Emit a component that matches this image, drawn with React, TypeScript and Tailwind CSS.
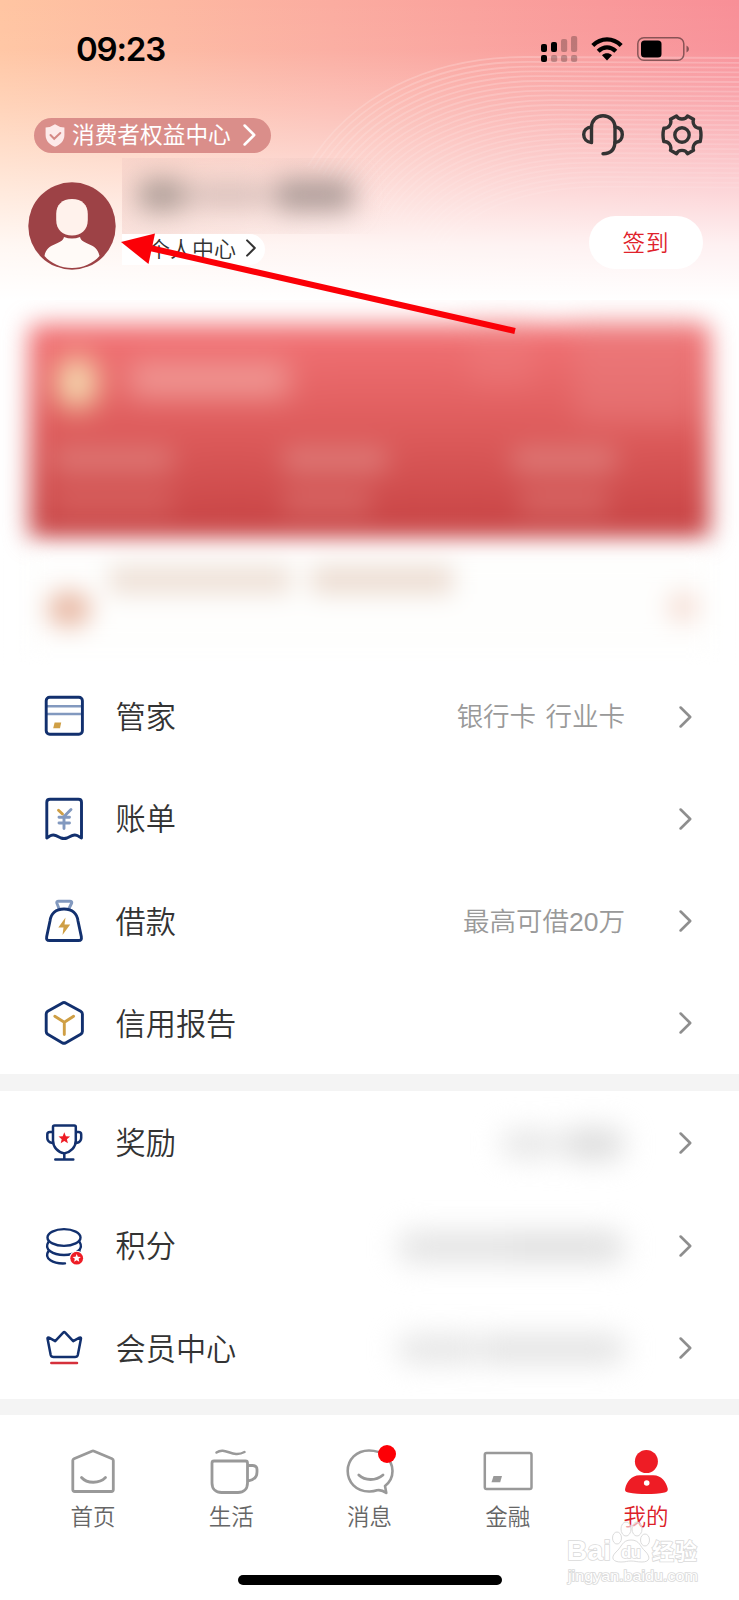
import React from 'react'

const NAVY = '#12306e'
const STEEL = '#8299bf'
const GOLD = '#cf9f45'
const RED = '#ee1c25'

type IconProps = {
  children: React.ReactNode
}

type MenuItem = {
  label: string
  note?: string
  hidden?: React.ReactNode
  icon: React.ReactNode
}

type TabItem = {
  label: string
  active?: boolean
  badge?: boolean
  icon: React.ReactNode
}

function RowIcon({ children }: IconProps) {
  return (
    <svg
      viewBox="0 0 44 44"
      className="w-11 h-11 mt-px shrink-0"
      fill="none"
      stroke={NAVY}
      strokeWidth="2.9"
      strokeLinecap="round"
      strokeLinejoin="round"
    >
      {children}
    </svg>
  )
}

function TabIcon({ children }: IconProps) {
  return (
    <svg
      viewBox="0 0 56 48"
      className="w-14 h-12"
      fill="none"
      stroke="#999999"
      strokeWidth="2.8"
      strokeLinecap="round"
      strokeLinejoin="round"
    >
      {children}
    </svg>
  )
}

const STAR =
  'M0 -6 L1.6 -2 L5.8 -1.8 L2.6 .9 L3.6 5 L0 2.7 L-3.6 5 L-2.6 .9 L-5.8 -1.8 L-1.6 -2 Z'

const assets: MenuItem[] = [
  {
    label: '管家',
    note: '银行卡 行业卡',
    icon: (
      <RowIcon>
        <path d="M5 11.3H40M5 19H40" stroke={STEEL} strokeWidth="2.5" />
        <rect x="4.2" y="2.3" width="36.2" height="37" rx="3.5" />
        <path d="M12.6 27.6H19.2L18 33.3H11.2Z" fill={GOLD} stroke="none" />
      </RowIcon>
    ),
  },
  {
    label: '账单',
    icon: (
      <RowIcon>
        <path d="M8 2.3H36.5Q39.5 2.3 39.5 5.3V41L36.5 39.2Q33.5 37 30 38.6L25 41Q22 42 19 41L14 38.6Q10.5 37 7.5 39.2L4.8 41V5.3Q4.8 2.3 8 2.3Z" />
        <path d="M16.5 13.2L20.5 17" stroke={GOLD} />
        <path d="M29 12.5L22 19.5V31.5M17 20.3H27.5M17 26H27.5" stroke={STEEL} />
      </RowIcon>
    ),
  },
  {
    label: '借款',
    note: '最高可借20万',
    icon: (
      <RowIcon>
        <path d="M17 9.5L14.8 4Q14.3 2.2 16.5 2.2H28Q30.3 2.2 29.7 4L27 9.5" stroke={STEEL} />
        <path d="M22 10C13.5 10 8.8 15 8 22L4.7 37.5C4.2 40.4 5 41.5 7.5 41.5H36.5C39 41.5 39.8 40.4 39.3 37.5L36 22C35.2 15 30.5 10 22 10Z" />
        <path d="M23.5 18.5L16.3 28.5H21.5L20.5 36L28.2 25.5H22.5Z" fill={GOLD} stroke="none" />
      </RowIcon>
    ),
  },
  {
    label: '信用报告',
    icon: (
      <RowIcon>
        <path d="M20.5 1.9Q22 1.2 23.5 1.9L38.7 10.3Q40.4 11.3 40.4 13V30.6Q40.4 32.3 38.7 33.3L23.5 41.9Q22 42.7 20.5 41.9L5.7 33.3Q4.2 32.3 4.2 30.6V13Q4.2 11.3 5.7 10.3Z" />
        <path d="M12.8 15.2L22.3 21.3L31.6 15.2M22.3 21.3V33.5" stroke={GOLD} />
      </RowIcon>
    ),
  },
]

const rewards: MenuItem[] = [
  {
    label: '奖励',
    hidden: (
      <div className="flex items-center gap-1 blur-[14px]">
        <div className="w-14 h-7 rounded-full bg-[#e6e6e6]" />
        <div className="w-16 h-8 rounded-full bg-[#dddddd]" />
      </div>
    ),
    icon: (
      <RowIcon>
        <path d="M12.5 4.4H32.3Q33.8 4.4 33.8 6V19.5C33.8 26 29 31 22.3 32.4C15.5 31 11 26 11 19.5V6Q11 4.4 12.5 4.4Z" strokeWidth="2.5" />
        <path d="M10.5 11H8Q5.3 11 5.3 13.5V17Q5.3 21 10.5 22M34.3 11H36.5Q39.2 11 39.2 13.5V17Q39.2 21 34.3 22M22.3 33V38.5M13.3 38.5H31.3" strokeWidth="2.5" />
        <path d={STAR} transform="translate(22.3 17.3)" fill={RED} stroke="none" />
      </RowIcon>
    ),
  },
  {
    label: '积分',
    hidden: (
      <div className="flex items-center blur-[14px]">
        <div className="w-28 h-8 rounded-l-full bg-[#e4e4e4]" />
        <div className="w-29 h-8 rounded-r-full bg-[#e0e0e0]" />
      </div>
    ),
    icon: (
      <RowIcon>
        <ellipse cx="22" cy="13.5" rx="16.5" ry="8.4" strokeWidth="2.4" />
        <path d="M6.5 17.8C1.5 25.5 11 31 22 31C33 31 42.5 25.5 37.5 17.8M6.5 27C1.5 34.5 11 40 23 39.4M37.5 27V26" strokeWidth="2.4" />
        <circle cx="34.7" cy="34.2" r="7.5" fill="#ffffff" stroke="none" />
        <circle cx="34.7" cy="34.2" r="6.4" fill={RED} stroke="none" />
        <path d={STAR} transform="translate(34.7 34.2) scale(.72)" fill="#ffffff" stroke="none" />
      </RowIcon>
    ),
  },
  {
    label: '会员中心',
    hidden: (
      <div className="flex items-center gap-1 blur-[14px]">
        <div className="w-20 h-7 rounded-l-full bg-[#e5e5e5]" />
        <div className="w-36 h-7 rounded-r-full bg-[#e2e2e2]" />
      </div>
    ),
    icon: (
      <RowIcon>
        <path d="M5.5 12.4Q5.5 11.1 7 11.6L13.2 15.2L21.2 6.7Q22.2 5.7 23.2 6.7L31.2 15.2L37.5 11.6Q39 11.1 39 12.4L35.8 29Q35.3 31 33 31H11.5Q9.2 31 8.7 29Z" strokeWidth="2.5" />
        <path d="M9.3 37H35" stroke="#d5303b" strokeWidth="2.5" />
      </RowIcon>
    ),
  },
]

const tabs: TabItem[] = [
  {
    label: '首页',
    icon: (
      <TabIcon>
        <path d="M7.8 13.5Q7.8 12.2 9 11.7L26.8 4.2Q28 3.7 29.2 4.2L47.1 11.7Q48.3 12.2 48.3 13.5V42.5Q48.3 44.5 46.3 44.5H9.8Q7.8 44.5 7.8 42.5Z" />
        <path d="M16.5 30.5C22 36.8 34.5 36.8 40.5 30.5" />
      </TabIcon>
    ),
  },
  {
    label: '生活',
    icon: (
      <TabIcon>
        <path d="M11 14H42.5Q44.5 14 44.5 16V36C44.5 42 40.5 45.5 35 45.5H18.5C13 45.5 9 42 9 36V16Q9 14 11 14ZM45.5 18.5H49.5Q54 18.5 54 22.5V25C54 30 50.5 33 45.5 33.8" />
        <path d="M13.5 5.5C22.5 -.5 29.5 11.5 41.5 5" strokeWidth="2.5" />
      </TabIcon>
    ),
  },
  {
    label: '消息',
    badge: true,
    icon: (
      <TabIcon>
        <path d="M35 43.3C32.5 44.2 30 44.6 27 44.5C14 44.3 5.7 35 5.7 24C5.7 12.5 14.5 3.5 27 3.5C40 3.5 50.5 12 50.5 24C50.5 30 47.5 35.5 43 39L44.3 46C41 43.5 38.5 42.5 35 43.3Z" strokeWidth="2.6" />
        <path d="M16.8 28C23 34 34 34 41 28" />
      </TabIcon>
    ),
  },
  {
    label: '金融',
    icon: (
      <TabIcon>
        <rect x="4.8" y="6" width="46.7" height="36" rx="1.8" strokeWidth="2.5" />
        <path d="M13.5 29H22L20.2 35.2H11.5Z" fill="#999999" stroke="none" />
      </TabIcon>
    ),
  },
  {
    label: '我的',
    active: true,
    icon: (
      <TabIcon>
        <circle cx="28.4" cy="14.5" r="11.5" fill={RED} stroke="none" />
        <path d="M21.7 28.2H35.2C43.7 28.2 48.2 35 49.7 41.5C50.3 44 48.7 45 46.7 45.5C35.7 47.6 21.7 47.6 10.2 45.5C7.7 45 6.5 44 7.2 41.5C8.7 35 13.2 28.2 21.7 28.2Z" fill={RED} stroke="none" />
        <circle cx="28.7" cy="36" r="2.8" fill="#ffffff" stroke="none" />
      </TabIcon>
    ),
  },
]

// thin arcs that sweep in from the left and run flat to the right edge
function HeaderWaves() {
  return (
    <svg viewBox="0 0 739 300" className="absolute inset-x-0 top-0 w-full h-[300px]" fill="none">
      <defs>
        <linearGradient id="fade" x1="0" y1="0" x2="0" y2="1">
          <stop offset="0.18" stopColor="#ffffff" stopOpacity="0.22" />
          <stop offset="0.7" stopColor="#ffffff" stopOpacity="0.08" />
        </linearGradient>
        <mask id="fadeMask">
          <rect width="739" height="300" fill="url(#fade)" />
        </mask>
      </defs>
      <g mask="url(#fadeMask)" stroke="#ffffff" strokeWidth="1.8">
        {Array.from({ length: 28 }, (_, i) => (
          <path
            key={i}
            d={`M${308 + i * 5} ${166 + i * 3} C${350 + i * 4.5} ${96 + i * 4} ${430 + i * 4} ${57 + i * 4.8} ${525 + i * 3} ${57 + i * 4.8} L739 ${58 + i * 4.8}`}
          />
        ))}
      </g>
    </svg>
  )
}

function StatusBar() {
  return (
    <div className="h-[98px] flex items-center justify-between pl-[76px] pr-[49px]">
      <span className="font-['Inter'] font-semibold text-[33px] leading-none tracking-[-1.2px] text-black">
        09:23
      </span>
      <div className="flex items-center">
        <svg viewBox="0 0 37 26" className="w-[37px] h-[26px]">
          <rect x="0" y="8" width="6" height="8" rx="2" />
          <rect x="0" y="19" width="6" height="7" rx="2" />
          <rect x="10" y="6" width="6" height="10" rx="2" />
          <g opacity=".24">
            <rect x="10" y="19" width="6.2" height="7" rx="2" />
            <rect x="20" y="3" width="6.2" height="13" rx="2" />
            <rect x="20" y="19" width="6.2" height="7" rx="2" />
            <rect x="30" y="0" width="6.2" height="16" rx="2" />
            <rect x="30" y="19" width="6.2" height="7" rx="2" />
          </g>
        </svg>
        <svg viewBox="0 0 32 24" className="w-8 h-6 ml-[13px]" fill="none" stroke="#000000" strokeWidth="4.2">
          <path d="M1.8 8.5C10 .3 22 .3 30.2 8.5" />
          <path d="M7.2 14.2C12.5 9 19.5 9 24.8 14.2" />
          <path d="M11 18.2C14 15.6 18 15.6 21 18.2L16 23.5Z" fill="#000000" stroke="none" />
        </svg>
        <svg viewBox="0 0 53 24" className="w-[53px] h-6 ml-3.5" fill="none">
          <rect x=".8" y=".8" width="46" height="22.4" rx="6" stroke="#000000" strokeOpacity=".45" strokeWidth="1.5" />
          <rect x="4" y="3.5" width="20.5" height="17" rx="3.5" fill="#000000" />
          <path d="M49.5 8.5Q52 9.5 52 12T49.5 15.5Z" fill="#000000" fillOpacity=".45" />
        </svg>
      </div>
    </div>
  )
}

function HeadsetIcon() {
  return (
    <svg viewBox="0 0 42 42" className="w-[42px] h-[42px]" fill="none" stroke="#333333" strokeWidth="3.4" strokeLinecap="round" strokeLinejoin="round">
      <path d="M9.5 28V13.5C9.5 6.5 14.5 1.7 21 1.7S33 6.5 33 13.5V27C33 35 29 39.7 21 39.7" />
      <path d="M9.5 13C4.5 13.5 1.7 16.5 1.7 20.5S4.5 28 9.5 28.5M33 13C38 13.5 40.3 16.5 40.3 20.5S38 28 33 28.5" />
    </svg>
  )
}

function GearIcon() {
  return (
    <svg viewBox="0 0 42 42" className="w-[42px] h-[42px]" fill="none" stroke="#333333" strokeWidth="3.4" strokeLinecap="round" strokeLinejoin="round">
      <path d="M15.5 2C17.5 6 24.5 6 26.5 2L32.5 5.2C31 10.5 34.5 14.5 39.2 14.3Q40.8 21 39.2 27.5C34.5 27.3 31 31.3 32.5 36.3L26.5 39.7C24.5 35.3 17.5 35.3 15.5 39.7L9.5 36.3C11 31.3 7.5 27.3 2.8 27.5Q1.2 21 2.8 14.3C7.5 14.5 11 10.5 9.5 5.2Z" />
      <circle cx="21" cy="21" r="7.2" />
    </svg>
  )
}

function Avatar() {
  return (
    <svg viewBox="0 0 88 88" className="w-[88px] h-[88px] shrink-0">
      <circle cx="44" cy="44" r="43.7" fill="#9d4246" />
      <path
        d="M44 17C54 17 59.8 23 59.8 32V38C59.8 48 53 53.5 44 53.5S28.2 48 28.2 38V32C28.2 23 34 17 44 17Z"
        fill="#fff2ec"
      />
      <path
        d="M36 55Q44 58 52 55C54 63.5 69 60 71.5 74C65 81.5 55 86 44 86S23 81.5 16.5 74C19 60 34 63.5 36 55Z"
        fill="#fffaf7"
      />
    </svg>
  )
}

function Chevron({ className }: { className: string }) {
  return (
    <svg viewBox="0 0 13 23" className={className} fill="none" stroke="currentColor" strokeWidth="2.7" strokeLinecap="round" strokeLinejoin="round">
      <path d="M1.4 1.6L11.4 11.5L1.4 21.4" />
    </svg>
  )
}

function Header() {
  return (
    <header className="relative h-[300px] bg-[linear-gradient(to_bottom,rgba(255,255,255,0)_0px,rgba(255,255,255,0.04)_50px,rgba(255,255,255,0.25)_105px,rgba(255,255,255,0.58)_180px,rgba(255,255,255,0.87)_245px,#ffffff_300px),linear-gradient(to_right,#ffc5a2,#fbaca0_45%,#f88f97)]">
      <HeaderWaves />
      <div className="relative">
        <StatusBar />
        <div className="flex items-center justify-between pl-[34px] pr-9 h-[74px]">
          <div className="flex items-center h-[35px] w-[237px] rounded-full bg-[#da8e8a] pl-[11px] text-white">
            <svg viewBox="0 0 20 23" className="w-5 h-[23px]" fill="none">
              <path d="M10 .3Q14 3.3 19.4 3.5V11C19.4 17 15 21 10 22.8C5 21 .6 17 .6 11V3.5Q6 3.3 10 .3Z" fill="#fdeaea" />
              <path d="M5.5 11L9.2 14.8L15.3 9" stroke="#d58986" strokeWidth="2" strokeLinecap="round" />
            </svg>
            <span className="ml-[7px] -mt-0.5 text-[22.7px] leading-none font-normal whitespace-nowrap">消费者权益中心</span>
            <Chevron className="w-[13px] h-[22px] ml-3" />
          </div>
          <div className="flex items-center gap-[37px]">
            <HeadsetIcon />
            <GearIcon />
          </div>
        </div>
        <div className="flex items-start pl-7 pr-9">
          <div className="mt-2.5">
            <Avatar />
          </div>
          <div className="ml-1.5 -mt-3.5 w-[270px]">
            <div className="h-[76px] overflow-hidden bg-linear-to-r from-[#f3cdc7]/45 to-transparent">
              <div className="flex items-center gap-1 pt-[21px] pl-4 blur-[13px]">
                <div className="w-12 h-8 rounded-xl bg-[#a1938d]/85" />
                <div className="w-[76px] h-5 bg-[#cdb7b2]/90" />
                <div className="ml-1 w-20 h-8 rounded-xl bg-[#a0908d]/85" />
              </div>
            </div>
            <div className="flex items-center w-[143px] h-[31px] rounded-r-full bg-white pl-[26px] text-[#333333]">
              <span className="-mt-1.5 text-[22px] leading-none whitespace-nowrap">个人中心</span>
              <Chevron className="w-2.5 h-[18px] ml-2.5 -mt-1" />
            </div>
          </div>
          <button className="ml-auto mt-11 w-[114px] h-[53px] rounded-full bg-white pb-0.5 text-[22.5px] leading-none tracking-[1px] text-[#e0222b]">
            签到
          </button>
        </div>
      </div>
    </header>
  )
}

function MemberCard() {
  return (
    <section className="h-[365px] overflow-hidden">
      <div className="mt-[24px] mx-[29px] h-[215px] rounded-lg bg-linear-to-b from-[#f37376] via-[#dd5b5b] to-[#c64243] blur-[12px]">
        <div className="flex items-start h-[116px] pl-7 blur-[9px]">
          <div className="mt-[33px] w-10 h-13 rounded-full bg-[#f6e2b4]" />
          <div className="ml-8 mt-[38px] w-[160px] h-9 bg-[#f1a39d]/80" />
          <div className="ml-[180px] w-16 h-16 bg-[#ee8080]/40" />
          <div className="ml-[42px] w-[122px] h-[100px] bg-[#e98080]/45" />
        </div>
        <div className="grid grid-cols-[226px_229px_1fr] gap-y-[18px] pl-6 pt-2 blur-[6px]">
          <div className="w-30 h-6 bg-[#e08682]/75" />
          <div className="w-26 h-6 ml-1 bg-[#e08682]/80" />
          <div className="w-26 h-6 ml-1 bg-[#e08682]/80" />
          <div className="w-30 h-6 bg-[#dc6f6c]/60" />
          <div className="w-22 h-6 ml-1 bg-[#dc7471]/70" />
          <div className="w-22 h-6 ml-3 bg-[#dc7471]/70" />
        </div>
      </div>
      <div className="flex items-start mt-[14px] ml-6 mr-6 h-[100px] bg-[#fefefd] blur-[12px]">
        <div className="ml-[23px] mt-[38px] w-11 h-9 rounded-full bg-[#e9bba7]" />
        <div className="ml-[18px] mt-[13px] w-[182px] h-7 bg-[#eee0d6]" />
        <div className="ml-5 mt-[13px] w-[142px] h-7 bg-[#ecdcd1]" />
        <div className="ml-auto mr-4 mt-[38px] w-8 h-8 rounded-full bg-[#f6e0d7]" />
      </div>
    </section>
  )
}

function MenuRow({ item }: { item: MenuItem }) {
  return (
    <li className="flex flex-1 items-center pl-[42px] pr-[47px]">
      {item.icon}
      <span className="ml-[29.5px] -mt-0.5 text-[30.2px] leading-none text-[#333333]">{item.label}</span>
      <div className="ml-auto mr-[54px] mt-[3px] text-[26.5px] leading-none font-['Liberation_Sans','Noto_Sans_CJK_SC',sans-serif] [word-spacing:2px] text-[#999999]">
        {item.note ?? item.hidden}
      </div>
      <Chevron className="w-[13px] h-[22px] mt-px text-[#8e8e8e]" />
    </li>
  )
}

function TabBar() {
  return (
    <nav className="flex px-6 pt-8 h-[161px]">
      {tabs.map((tab) => (
        <div key={tab.label} className="relative flex flex-1 flex-col items-center">
          {tab.icon}
          {tab.badge && <span className="absolute top-[-2px] left-[77.5px] w-[18px] h-[18px] rounded-full bg-[#fd0006]" />}
          <span
            className={
              tab.active
                ? 'mt-[9px] text-[22.5px] leading-none text-[#dc2028]'
                : 'mt-[9px] text-[22.5px] leading-none text-[#666666]'
            }
          >
            {tab.label}
          </span>
        </div>
      ))}
    </nav>
  )
}

function Watermark() {
  return (
    <div className="absolute left-[566px] top-[1521px] w-[140px]">
      <svg viewBox="0 0 140 72" className="w-[140px] h-[72px]">
        <g fill="#ffffff" stroke="#dcdcdc" strokeWidth="1">
          <ellipse cx="51" cy="17" rx="4.5" ry="6" />
          <ellipse cx="60" cy="8" rx="5" ry="7" fillOpacity=".6" />
          <ellipse cx="71" cy="8" rx="5" ry="7" fillOpacity=".6" />
          <ellipse cx="79" cy="19" rx="4.5" ry="6" />
          <path d="M65 19C56 19 56 26 50 31C44 37 47 41 55 41C60 41 61 40 65 40S71 41 76 41C84 41 85 36 79 30C74 26 74 19 65 19Z" />
        </g>
        <g fill="#ffffff" stroke="#dadada" strokeWidth="1.6" paintOrder="stroke" fontFamily="'Liberation Sans', 'Noto Sans CJK SC', sans-serif" fontWeight="700">
          <text x="1" y="39" fontSize="28" textLength="44">Bai</text>
          <text x="55" y="37" fontSize="17" textLength="20">du</text>
          <text x="86" y="38" fontSize="22" textLength="45">经验</text>
          <text x="2" y="60" fontSize="14.5" fontWeight="400" textLength="130" lengthAdjust="spacingAndGlyphs">jingyan.baidu.com</text>
        </g>
      </svg>
    </div>
  )
}

export default function App() {
  return (
    <main className="relative w-[739px] h-[1600px] overflow-hidden bg-white font-['Noto_Sans_CJK_SC',sans-serif] font-[350]">
      <Header />
      <MemberCard />
      <ul className="flex flex-col h-[409px]">
        {assets.map((item) => (
          <MenuRow key={item.label} item={item} />
        ))}
      </ul>
      <div className="h-[17px] bg-[#f4f4f4]" />
      <ul className="flex flex-col h-[308px]">
        {rewards.map((item) => (
          <MenuRow key={item.label} item={item} />
        ))}
      </ul>
      <div className="h-4 bg-[#f4f4f4]" />
      <TabBar />

      <div className="absolute left-[238px] top-[1575px] w-[264px] h-2.5 rounded-full bg-black" />
      <Watermark />
      <svg viewBox="0 0 400 104" className="absolute left-[120px] top-[232px] w-[400px] h-[104px]">
        <path d="M30 16L395 99" stroke="#fb0007" strokeWidth="6" />
        <path d="M1 10L35 1.5L28.5 32Z" fill="#fb0007" />
      </svg>
    </main>
  )
}
